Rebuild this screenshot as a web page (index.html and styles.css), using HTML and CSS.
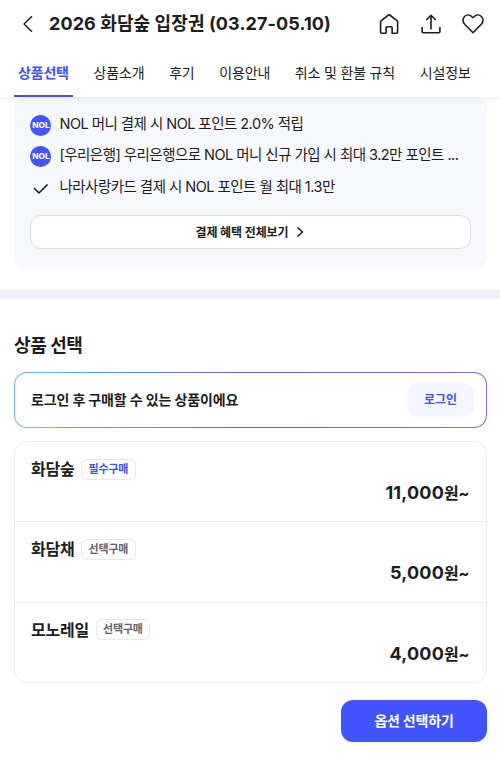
FILE: index.html
```html
<!DOCTYPE html>
<html lang="ko">
<head>
<meta charset="utf-8">
<meta name="viewport" content="width=device-width, initial-scale=1">
<title>2026 화담숲 입장권</title>
<link rel="stylesheet" href="styles.css">
</head>
<body>
<header class="header">
  <div class="title-bar">
    <svg class="back" width="24" height="24" viewBox="0 0 24 24"><path d="M17 4.200 9 12l8 7.800"/></svg>
    <h1 class="title">2026 화담숲 입장권 (03.27-05.10)</h1>
    <div class="actions">
      <svg width="24" height="24" viewBox="0 0 24 24"><path d="M3.600 9.600a1 1 0 0 1 .400-.800L11.500 3a1 1 0 0 1 1.200 0l7.500 5.800a1 1 0 0 1 .400.800v10.600a1 1 0 0 1-1 1h-4.500v-5.500a1 1 0 0 0-1-1h-4a1 1 0 0 0-1 1v5.500H4.600a1 1 0 0 1-1-1z"/></svg>
      <svg width="24" height="24" viewBox="0 0 24 24"><path d="M12 17.500V3.600M7.300 8 12 3.300 16.700 8M3.100 15v4.800a1 1 0 0 0 1 1h15.800a1 1 0 0 0 1-1V15"/></svg>
      <svg width="24" height="24" viewBox="0 0 24 24"><path d="M12 20.700 3.700 12.300C1.400 9.900 1.500 6.500 3.600 4.500c2.100-2 5.300-1.900 7.300.200L12 5.800l1.100-1.100c2-2.100 5.200-2.200 7.300-.200 2.100 2 2.200 5.400-.100 7.800z"/></svg>
    </div>
  </div>
  <nav class="tabs">
    <a class="tab tab-active">상품선택</a>
    <a class="tab">상품소개</a>
    <a class="tab">후기</a>
    <a class="tab">이용안내</a>
    <a class="tab">취소 및 환불 규칙</a>
    <a class="tab">시설정보</a>
  </nav>
</header>
<main>
  <section class="benefits">
    <ul class="benefit-list">
      <li class="benefit"><span class="nol"><span class="nol-text">NOL</span></span><span class="benefit-text">NOL 머니 결제 시 NOL 포인트 2.0% 적립</span></li>
      <li class="benefit"><span class="nol"><span class="nol-text">NOL</span></span><span class="benefit-text">[우리은행] 우리은행으로 NOL 머니 신규 가입 시 최대 3.2만 포인트 ...</span></li>
      <li class="benefit"><svg class="check" width="21" height="21" viewBox="0 0 21 21"><path d="m4 10 5 5 8.500-8.500"/></svg><span class="benefit-text">나라사랑카드 결제 시 NOL 포인트 월 최대 1.3만</span></li>
    </ul>
    <button class="all-benefits">결제 혜택 전체보기<svg class="chevron" width="8" height="12" viewBox="0 0 8 12"><path d="m1.500 1.500 5 4.500-5 4.500"/></svg></button>
  </section>
  <div class="divider"></div>
  <section class="products">
    <h2 class="heading">상품 선택</h2>
    <div class="login-banner">
      <p class="login-text">로그인 후 구매할 수 있는 상품이에요</p>
      <button class="login-button">로그인</button>
    </div>
    <div class="product-list">
      <article class="product">
        <div class="product-head"><h3 class="name">화담숲</h3><span class="badge badge-required">필수구매</span></div>
        <p class="price">11,000<span class="won">원~</span></p>
      </article>
      <article class="product">
        <div class="product-head"><h3 class="name">화담채</h3><span class="badge">선택구매</span></div>
        <p class="price">5,000<span class="won">원~</span></p>
      </article>
      <article class="product">
        <div class="product-head"><h3 class="name">모노레일</h3><span class="badge">선택구매</span></div>
        <p class="price">4,000<span class="won">원~</span></p>
      </article>
    </div>
    <div class="cta-row"><button class="cta">옵션 선택하기</button></div>
  </section>
</main>
</body>
</html>
```
FILE: styles.css
```css
* { box-sizing: border-box; margin: 0; padding: 0; }
body {
  height: 757px;
  overflow: hidden;
  background: #fff;
  color: #1c1d20;
  font-family: Inter, "Noto Sans CJK KR", sans-serif;
}
button { font-family: inherit; border: 0; color: inherit; }
svg { flex: none; fill: none; stroke: #1c1d20; stroke-width: 1.6; stroke-linejoin: round; }

.header {
  position: relative;
  z-index: 1;
  height: 97px;
  background: #fff;
  box-shadow: 0 2px 8px rgba(30, 35, 50, .07);
}
.title-bar { display: flex; align-items: center; height: 48px; padding: 0 15px; }
.back { stroke-width: 1.4; }
.title { margin-left: 10px; font-size: 18px; line-height: 26px; font-weight: 700; letter-spacing: .1px; white-space: nowrap; }
.actions { display: flex; gap: 18px; margin-left: auto; }
.tabs { display: flex; gap: 16.750px; height: 49px; padding-left: 14px; }
.tab { padding: 0 4px; font-size: 14px; line-height: 50px; letter-spacing: -.18px; white-space: nowrap; }
.tab-active { color: #4154ff; font-weight: 700; border-bottom: 2px solid #4154e0; }

.benefits { height: 172px; margin: 0 13px 0 14px; padding: 11px 16px 0; border-radius: 12px; background: #f7f8fc; }
.benefit-list { list-style: none; }
.benefit { display: flex; align-items: center; gap: 8.500px; height: 31.500px; }
.benefit-text { font-size: 14.500px; line-height: 24px; letter-spacing: -.54px; white-space: nowrap; }
.nol {
  display: flex;
  flex: none;
  justify-content: center;
  width: 21px;
  height: 21px;
  margin-top: 3px;
  border-radius: 50%;
  background: #4154ff;
}
.nol-text { color: #fff; font-size: 7.500px; line-height: 21px; font-weight: 800; transform: scaleX(1.1); }
.check { margin-top: 4px; }
.all-benefits {
  display: flex;
  align-items: center;
  justify-content: center;
  gap: 7px;
  width: 100%;
  height: 34px;
  margin-top: 12.500px;
  padding: 0 2px 1px 0;
  border: 1px solid #dcdde1;
  border-radius: 11px;
  background: #fff;
  font-size: 12px;
  font-weight: 700;
  letter-spacing: -.1px;
}
.chevron { margin-top: 1px; }
.divider { height: 9px; margin-top: 21px; background: #f1f2f7; }

.products { padding: 32px 13px 0 14px; }
.heading { font-size: 18px; line-height: 30px; font-weight: 700; letter-spacing: -.4px; }
.login-banner {
  display: flex;
  align-items: center;
  justify-content: space-between;
  height: 56px;
  margin-top: 11px;
  padding: 0 12px 0 16px;
  border: 1px solid transparent;
  border-radius: 13px;
  background: linear-gradient(#fff, #fff) padding-box, linear-gradient(90deg, #68b9f0, #5b68c4 50%, #9b62cf) border-box;
}
.login-text { padding-bottom: 2px; font-size: 14px; font-weight: 700; letter-spacing: -.13px; }
.login-button { width: 67px; height: 34px; padding-bottom: 3px; border-radius: 11px; background: #f5f6ff; color: #4154f0; font-size: 12px; font-weight: 700; }
.product-list { height: 242px; margin-top: 13px; border: 1px solid #ececef; border-radius: 13px; }
.product { height: 80.500px; padding: 14px 17px 0 16px; }
.product:first-child { height: 79px; }
.product + .product { border-top: 1px solid #ececef; }
.product-head { display: flex; align-items: center; gap: 6.500px; height: 26px; }
.name { font-size: 16px; line-height: 26px; font-weight: 700; letter-spacing: -.2px; }
.badge { height: 21px; padding: 0 6.500px; border: 1px solid #e9e9ec; border-radius: 6px; color: #65666b; font-size: 11px; line-height: 19px; font-weight: 600; letter-spacing: -.2px; }
.badge-required { border-color: #e5e7ff; color: #4154ff; font-weight: 700; }
.price { margin-top: -3px; font-size: 18px; line-height: 28px; font-weight: 700; letter-spacing: .2px; text-align: right; }
.won { font-size: 16px; letter-spacing: -.3px; }
.cta-row { display: flex; justify-content: flex-end; margin-top: 17px; }
.cta { width: 146px; height: 42px; padding-bottom: 2px; border-radius: 12px; background: #4154ff; color: #fff; font-size: 14px; font-weight: 700; letter-spacing: -.2px; }
```
